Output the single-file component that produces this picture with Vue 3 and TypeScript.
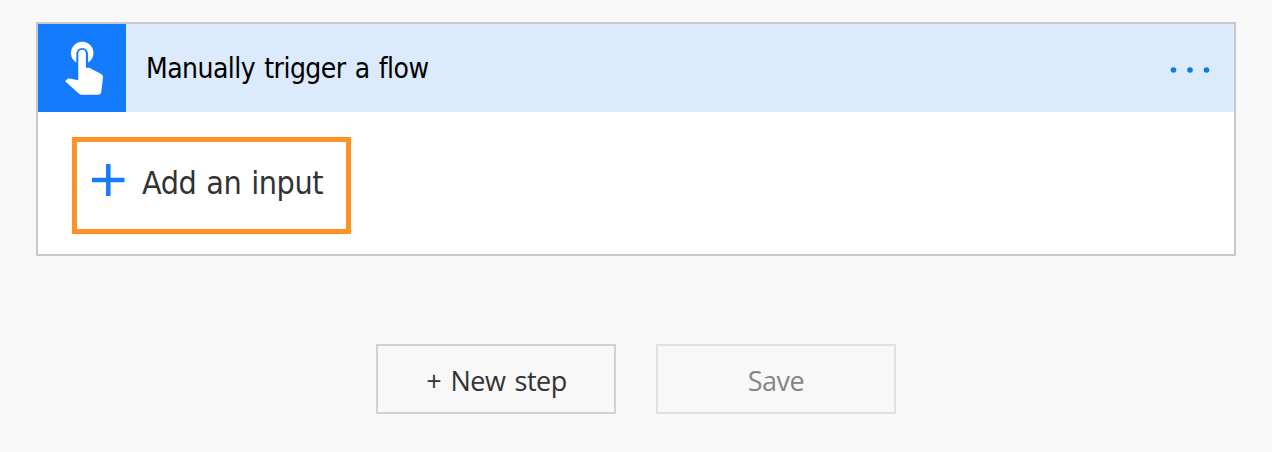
<script setup lang="ts">
const title: string = 'Manually trigger a flow'
</script>

<template>
  <main class="canvas">
    <section class="card">
      <header class="card-header">
        <div class="tile">
          <svg viewBox="0 0 88 88" width="88" height="88">
            <path fill="#fff" d="M38.3 38.6A11.3 11.3 0 1 1 50.1 38.6V30.6C50.1 26.8 47.6 23.9 44.2 23.9S38.3 26.8 38.3 30.6Z" />
            <path fill="#fff" d="M40.3 29.6a3.8 3.8 0 0 1 7.6 0V43.8H51.2L63.2 50Q65.4 51.1 65 53.5L63.3 67.4Q63 70.7 59.8 70.7H44.2Q42.2 70.7 40.7 69.4L27.2 57.2L28.9 55.4Q29.8 54.2 31.5 54.5L40.3 56.2Z" />
          </svg>
        </div>
        <h1 class="title"><span>{{ title }}</span></h1>
        <button class="more" aria-label="More options">
          <svg viewBox="0 0 42 8" width="42" height="8" fill="#0f7bdb">
            <circle cx="4.5" cy="4" r="2.8" /><circle cx="21" cy="4" r="2.8" /><circle cx="37.5" cy="4" r="2.8" />
          </svg>
        </button>
      </header>
      <div class="card-body">
        <button class="add">
          <svg viewBox="0 0 34 34" width="34" height="34"><path d="M1 17H33.5M17.3 1V33" stroke="#147bfd" stroke-width="4.5" /></svg>
          <span>Add an input</span>
        </button>
      </div>
    </section>
    <div class="actions">
      <button class="action new"><span>+ New step</span></button>
      <button class="action save" disabled><span>Save</span></button>
    </div>
  </main>
</template>

<style>
body { background: #f8f8f8; }
</style>

<style scoped>
* { box-sizing: border-box; }
.canvas { height: 452px; padding: 22px 36px 0; background: #f8f8f8; font-family: "Open Sans", "Noto Sans", sans-serif; }
.card { height: 234px; border: 2px solid #c8c8c8; background: #fff; }
.card-header { display: flex; align-items: center; height: 88px; background: #dceafe; }
.tile { width: 88px; height: 88px; background: #147bfd; }
.tile svg { display: block; }
.title, .add { font-family: "DejaVu Sans Condensed", "DejaVu Sans", sans-serif; font-stretch: condensed; }
.title { flex: 1; margin: 0; padding: 2px 0 0 20px; font-size: 28px; font-weight: 400; line-height: 38px; letter-spacing: -0.54px; word-spacing: 1.7px; color: #000; white-space: nowrap; }
button { margin: 0; padding: 0; font-family: inherit; background: none; border: 0; }
.more { height: 8px; margin: 4px 23px 0 0; }
.more svg { display: block; }
.card-body { padding: 25px 34px; }
.add { display: flex; align-items: center; width: 279px; height: 97px; padding: 0 0 5px 14px; border: 5px solid #ff9226; font-size: 32px; line-height: 42px; letter-spacing: -0.5px; word-spacing: 1.5px; color: #333; white-space: nowrap; }
.add svg { margin: 0 17px 6px 0; }
.actions { display: flex; justify-content: center; gap: 40px; margin-top: 88px; }
.action { width: 240px; height: 70px; border: 2px solid #d2d2d2; font-size: 27px; line-height: 36px; letter-spacing: -0.5px; color: #333; }
.action span { display: block; padding-top: 3px; }
.new { word-spacing: 2.7px; }
.new span { padding-left: 1px; }
.save { border-color: #e1e1e1; color: #858585; }
</style>
